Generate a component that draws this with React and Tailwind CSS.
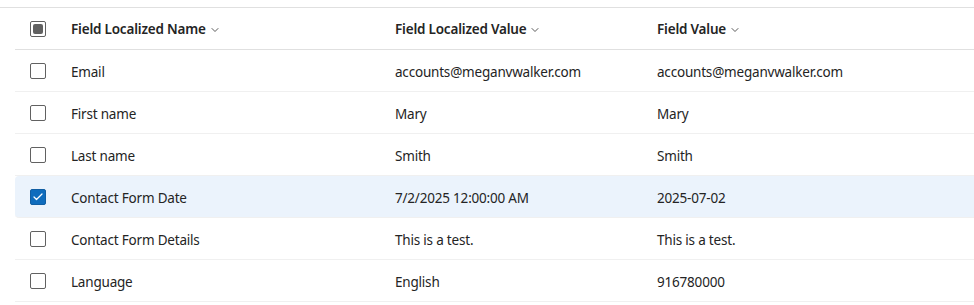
import { Check, ChevronDown } from "lucide-react";

const rows = [
    { name: "Email", localized: "accounts@meganvwalker.com", value: "accounts@meganvwalker.com" },
    { name: "First name", localized: "Mary", value: "Mary" },
    { name: "Last name", localized: "Smith", value: "Smith" },
    { name: "Contact Form Date", localized: "7/2/2025 12:00:00 AM", value: "2025-07-02", selected: true },
    { name: "Contact Form Details", localized: "This is a test.", value: "This is a test." },
    { name: "Language", localized: "English", value: "916780000" },
];

const cols = "grid grid-cols-[44px_324px_262px_1fr] items-center";

function Checkbox({ checked, mixed }) {
    if (checked) {
        return (
            <span className="flex h-4 w-4 items-center justify-center rounded-[2px] border border-[#115ea3] bg-[#0f6cbd]">
                <Check size={12} strokeWidth={2.5} className="text-white" />
            </span>
        );
    }
    return (
        <span className="flex h-4 w-4 items-center justify-center rounded-[2px] border border-[#616161] bg-white">
            {mixed && <span className="h-[10px] w-[10px] rounded-[2px] bg-[#616161]" />}
        </span>
    );
}

function HeaderCell({ label }) {
    return (
        <div className="flex items-center gap-[3px] pl-3 pt-[2px] font-semibold">
            {label}
            <ChevronDown size={12} strokeWidth={1.75} className="mt-[1px] text-[#424242]" />
        </div>
    );
}

export default function App() {
    return (
        <div
            className="h-[305px] w-[974px] bg-white pt-[7px] text-[13.5px] tracking-[-0.2px] text-[#242424]"
            style={{ fontFamily: '"Segoe UI", "Noto Sans", sans-serif' }}
        >
            <div className="border-t border-[#e0e0e0]">
                <div className="ml-[15px]">
                    <div className={`${cols} h-[42px] border-b border-[#e0e0e0]`}>
                        <div className="pl-[15px]">
                            <Checkbox mixed />
                        </div>
                        <HeaderCell label="Field Localized Name" />
                        <HeaderCell label="Field Localized Value" />
                        <HeaderCell label="Field Value" />
                    </div>
                    {rows.map((row) => (
                        <div
                            key={row.name}
                            className={`${cols} h-[42px] border-b border-[#f0f0f0] ${row.selected ? "rounded-l-[4px] bg-[#ebf3fc]" : ""}`}
                        >
                            <div className="pl-[15px]">
                                <Checkbox checked={row.selected} />
                            </div>
                            <div className="pl-3 pt-[3px]">{row.name}</div>
                            <div className="pl-3 pt-[3px]">{row.localized}</div>
                            <div className="pl-3 pt-[3px]">{row.value}</div>
                        </div>
                    ))}
                </div>
            </div>
        </div>
    );
}
